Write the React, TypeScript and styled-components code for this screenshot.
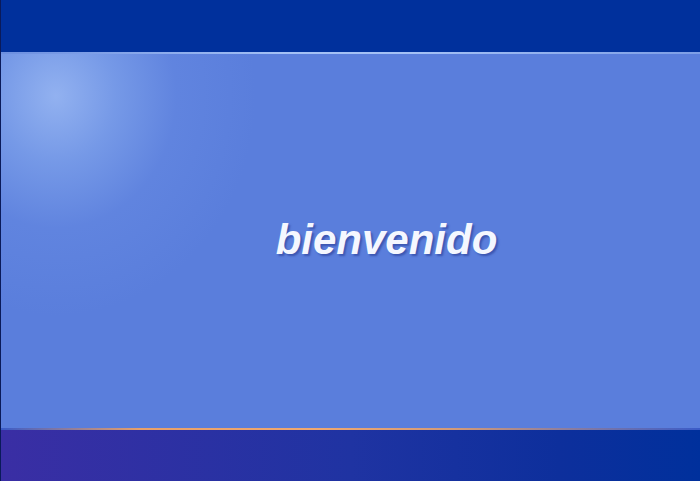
import React from 'react';
import styled, { createGlobalStyle } from 'styled-components';

const GlobalStyle = createGlobalStyle`
  html, body {
    margin: 0;
    padding: 0;
    background: #00309c;
    overflow: hidden;
  }
`;

const Screen = styled.div`
  width: 700px;
  height: 481px;
  display: flex;
  flex-direction: column;
  border-left: 1px solid #0a1a5a;
  box-sizing: border-box;
`;

const TopBar = styled.div`
  height: 52px;
  background: #00309c;
  flex-shrink: 0;
`;

const TopLine = styled.div`
  height: 2px;
  flex-shrink: 0;
  background: linear-gradient(to right, #6c8fe0 0%, #a3c0f5 40%, #a3c0f5 60%, #7d9ee6 100%);
`;

const Middle = styled.div`
  flex: 1;
  display: flex;
  align-items: center;
  justify-content: center;
  padding-left: 72px;
  background:
    radial-gradient(ellipse 200px 220px at 55px 42px, rgba(160, 190, 245, 0.8) 0%, rgba(140, 175, 240, 0.55) 30%, rgba(115, 150, 232, 0.25) 60%, rgba(90, 126, 220, 0) 100%),
    #5a7edc;
`;

const Welcome = styled.div`
  font-family: "Liberation Sans", Arial, sans-serif;
  font-style: italic;
  font-weight: bold;
  font-size: 42px;
  color: #f4f7ff;
  text-shadow: 2px 2px 2px rgba(40, 60, 150, 0.6);
  margin-top: -2px;
`;

const BottomLine = styled.div`
  height: 2px;
  flex-shrink: 0;
  background: linear-gradient(to right, #3a5bc8 0%, #e8a06a 20%, #f0a870 45%, #d29a78 65%, #3a5bc8 100%);
`;

const BottomBar = styled.div`
  height: 51px;
  flex-shrink: 0;
  background: linear-gradient(to right, #3a2ea4 0%, #1f33a2 50%, #0d2f9c 80%, #00309c 100%);
`;

export default function App() {
  return (
    <>
      <GlobalStyle />
      <Screen>
        <TopBar />
        <TopLine />
        <Middle>
          <Welcome>bienvenido</Welcome>
        </Middle>
        <BottomLine />
        <BottomBar />
      </Screen>
    </>
  );
}
